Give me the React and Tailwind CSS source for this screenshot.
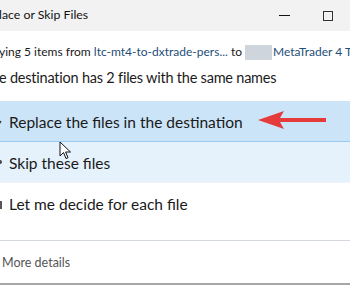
import React from 'react';

const font = { fontFamily: 'Lato, "Noto Sans", sans-serif' };

const RedArrow = () => (
  <svg className="absolute left-[256px] top-[109px]" width="72" height="22" viewBox="0 0 72 22">
    <path d="M2 11 L28 2 L24 9 L70 9 L70 13 L24 13 L28 20 Z" fill="#e63b3b" />
  </svg>
);

const Cursor = () => (
  <svg className="absolute left-[59px] top-[141px]" width="14" height="20" viewBox="0 0 14 20">
    <path d="M1 1 L1 15 L4.5 11.5 L7 17.5 L9 16.7 L6.6 11 L11.5 11 Z" fill="#fff" stroke="#111" strokeWidth="1" strokeLinejoin="round" />
  </svg>
);

export default function App() {
  return (
    <div className="relative w-[350px] h-[287px] overflow-hidden bg-white text-[#1a1a1a]" style={font}>
      {/* title bar */}
      <div className="h-[31px] bg-[#f2f2f2] flex items-center">
        <span className="text-[12.3px] ml-[-1px] text-[#111]">lace or Skip Files</span>
        <div className="ml-auto flex items-center">
          <div className="w-[11px] h-px bg-[#111] mr-[33px]" />
          <div className="w-[10px] h-[10px] border border-[#333] mr-[17px]" />
        </div>
      </div>

      {/* source / destination line */}
      <div className="mt-[11px] h-[20px] flex items-center text-[12px] whitespace-nowrap">
        <span className="shrink-0 ml-[-1px]">ying 5 items from&nbsp;</span>
        <span className="shrink-0 text-[#1e4e79]">ltc-mt4-to-dxtrade-pers...</span>
        <span className="shrink-0 ml-[3px] mr-[3px]">to</span>
        <span className="shrink-0 inline-block w-[27px] h-[15px] bg-[#cfd5dc]" />
        <span className="shrink-0 ml-px text-[#1e4e79]">MetaTrader 4 Terminal</span>
      </div>

      {/* main instruction */}
      <div className="mt-[5px] h-[22px] flex items-center text-[14.5px] tracking-[-0.22px] whitespace-nowrap ml-[-1px] text-[#1b1b1b]">
        e destination has 2 files with the same names
      </div>

      {/* options */}
      <div className="mt-[12px] flex flex-col">
        <div className="h-[41px] pt-[3px] bg-[#cce4f7] border-b border-[#99c9ef] flex items-center">
          <svg className="ml-[-2px] mr-[3px]" width="8" height="14" viewBox="0 0 8 14">
            <path d="M0 10 L3 5" stroke="#333" strokeWidth="1.4" />
          </svg>
          <span className="text-[15.5px] whitespace-nowrap">Replace the files in the destination</span>
        </div>
        <div className="h-[41px] pt-[3px] bg-[#e5f1fb] border-b border-[#eef4fa] flex items-center">
          <svg className="ml-[-2px] mr-[3px]" width="8" height="14" viewBox="0 0 8 14">
            <circle cx="2" cy="5" r="2" fill="#444" />
          </svg>
          <span className="text-[15.5px] whitespace-nowrap">Skip these files</span>
        </div>
        <div className="h-[41px] pt-[3px] flex items-center">
          <svg className="ml-[-2px] mr-[3px]" width="8" height="14" viewBox="0 0 8 14">
            <rect x="0" y="3" width="4" height="8" fill="#555" />
          </svg>
          <span className="text-[15.5px] whitespace-nowrap">Let me decide for each file</span>
        </div>
      </div>

      {/* footer */}
      <div className="mt-[16px] border-t border-[#d4d9df] h-[45px] pt-[2px] flex items-center border-b-2 border-b-[#a6a6a6]">
        <span className="ml-[2px] text-[12.5px] text-[#555]">More details</span>
      </div>

      <RedArrow />
      <Cursor />
    </div>
  );
}
